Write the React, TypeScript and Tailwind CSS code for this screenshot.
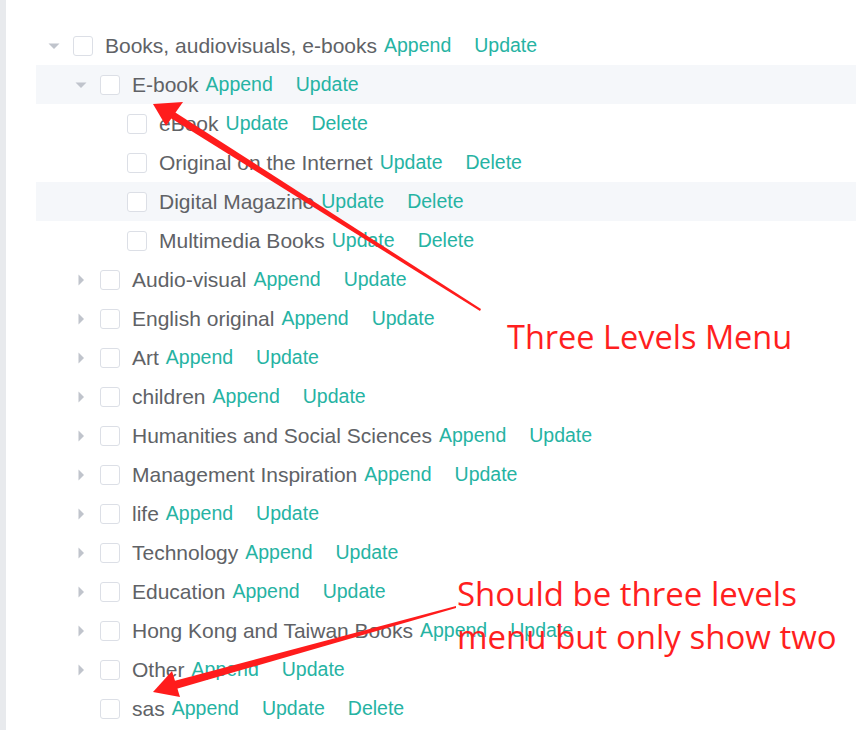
import React from "react";

type Node = {
  label: string;
  level: number;
  expanded?: boolean;
  leaf?: boolean;
  actions: string[];
  highlight?: boolean;
};

const nodes: Node[] = [
  { label: "Books, audiovisuals, e-books", level: 0, expanded: true, actions: ["Append", "Update"] },
  { label: "E-book", level: 1, expanded: true, actions: ["Append", "Update"], highlight: true },
  { label: "eBook", level: 2, leaf: true, actions: ["Update", "Delete"] },
  { label: "Original on the Internet", level: 2, leaf: true, actions: ["Update", "Delete"] },
  { label: "Digital Magazine", level: 2, leaf: true, actions: ["Update", "Delete"], highlight: true },
  { label: "Multimedia Books", level: 2, leaf: true, actions: ["Update", "Delete"] },
  { label: "Audio-visual", level: 1, actions: ["Append", "Update"] },
  { label: "English original", level: 1, actions: ["Append", "Update"] },
  { label: "Art", level: 1, actions: ["Append", "Update"] },
  { label: "children", level: 1, actions: ["Append", "Update"] },
  { label: "Humanities and Social Sciences", level: 1, actions: ["Append", "Update"] },
  { label: "Management Inspiration", level: 1, actions: ["Append", "Update"] },
  { label: "life", level: 1, actions: ["Append", "Update"] },
  { label: "Technology", level: 1, actions: ["Append", "Update"] },
  { label: "Education", level: 1, actions: ["Append", "Update"] },
  { label: "Hong Kong and Taiwan Books", level: 1, actions: ["Append", "Update"] },
  { label: "Other", level: 1, actions: ["Append", "Update"] },
  { label: "sas", level: 1, leaf: true, actions: ["Append", "Update", "Delete"] },
];

const indent = ["pl-0", "pl-[27px]", "pl-[54px]"];

function Caret({ expanded, leaf }: { expanded?: boolean; leaf?: boolean }) {
  return (
    <span className="w-[36px] h-[39px] flex items-center justify-center shrink-0">
      {!leaf && (
        <svg
          width="12"
          height="12"
          viewBox="0 0 12 12"
          className={expanded ? "rotate-90" : ""}
        >
          <path d="M3.5 0.5 L9 6 L3.5 11.5 Z" fill="#c0c4cc" />
        </svg>
      )}
    </span>
  );
}

function TreeRow({ node }: { node: Node }) {
  return (
    <div
      className={`flex items-center h-[39px] ${indent[node.level]} ${
        node.highlight ? "bg-[#f5f7fa]" : ""
      }`}
    >
      <Caret expanded={node.expanded} leaf={node.leaf} />
      <span className="w-[20px] h-[20px] ml-[1px] rounded-[3px] border-[1.5px] border-[#dcdfe6] bg-white shrink-0" />
      <span className="ml-[12px] text-[21px] text-[#606266] whitespace-nowrap">{node.label}</span>
      <span className="flex items-center ml-[7px] gap-[23px]">
        {node.actions.map((a) => (
          <button key={a} className="text-[19.5px] text-[#26b3a3] whitespace-nowrap">
            {a}
          </button>
        ))}
      </span>
    </div>
  );
}

export default function App() {
  return (
    <div
      className="relative flex w-[856px] h-[730px] bg-white overflow-hidden"
      style={{ fontFamily: '"Liberation Sans", Arial, sans-serif' }}
    >
      <div className="w-[6px] bg-[#e8eaed] shrink-0" />
      <div className="flex-1 pl-[30px] pt-[26px]">
        {nodes.map((n, i) => (
          <TreeRow key={i} node={n} />
        ))}
      </div>

      {/* annotation arrows */}
      <svg className="absolute inset-0 pointer-events-none" width="856" height="730">
        <polygon points="480,311 481,309 173,111 169,117" fill="#ff1c1c" />
        <polygon points="153,104 183,102 166,126" fill="#ff1c1c" />
        <polygon points="456,606 456,608 176,689 174,681" fill="#ff1c1c" />
        <polygon points="153,692 172,671 180,697" fill="#ff1c1c" />
      </svg>

      <div
        className="absolute left-[507px] top-[315px] text-[32.5px] leading-[44px] text-[#ff1f1f] whitespace-nowrap"
        style={{ fontFamily: '"Open Sans", "Noto Sans", sans-serif' }}
      >
        Three Levels Menu
      </div>
      <div
        className="absolute left-[457px] top-[572px] text-[33px] leading-[43px] text-[#ff1f1f] whitespace-nowrap"
        style={{ fontFamily: '"Open Sans", "Noto Sans", sans-serif' }}
      >
        Should be three levels
        <br />
        menu but only show two
      </div>
    </div>
  );
}
